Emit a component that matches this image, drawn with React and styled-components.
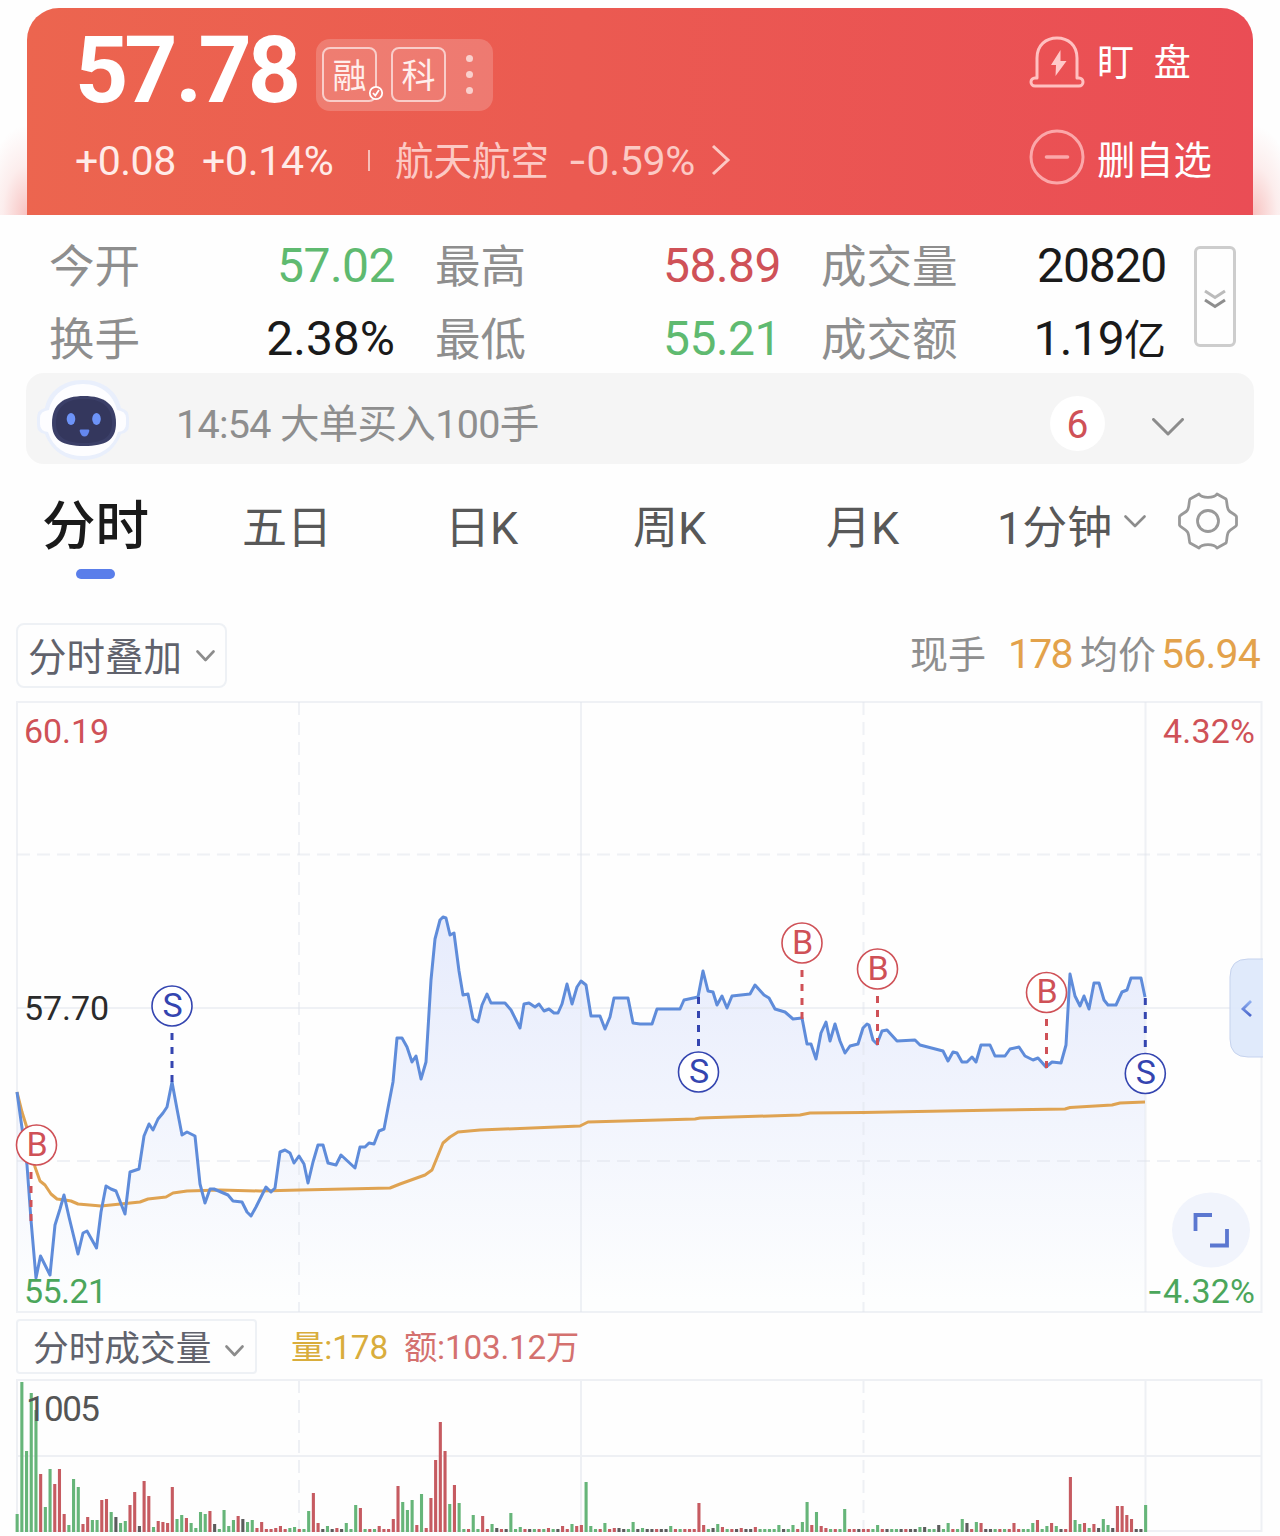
import React from "react";
import styled, { createGlobalStyle, css } from "styled-components";

const RED = "#cf5157";
const GREEN = "#5fba70";
const BLUE = "#3445b0";
const GRID = "#eef0f4";

const GlobalStyle = createGlobalStyle`
  * { box-sizing: border-box; }
  body {
    margin: 0;
    background: #fefefe;
    font-family: Roboto, "Noto Sans CJK SC", sans-serif;
  }
`;

const Page = styled.div`
  width: 1280px;
  height: 1536px;
  overflow: hidden;
  display: flex;
  flex-direction: column;
  background: #fefefe;
`;

const Text = styled.span`
  padding-top: ${(p) => p.$drop || 0}px;
  font-size: ${(p) => p.$size}px;
  line-height: 1.1;
  letter-spacing: ${(p) => p.$track || 0}px;
  font-weight: ${(p) => p.$weight || 400};
  color: ${(p) => p.$color || "inherit"};
  white-space: pre;
`;

const Minus = styled.span`
  font-family: Inter, sans-serif;
`;

/* ---------- price header ---------- */

const Hero = styled.header`
  flex: none;
  height: 215px;
  padding: 8px 27px 0;
  background:
    radial-gradient(ellipse 44px 90px at 27px 100%, rgba(236, 90, 85, 0.36), rgba(236, 90, 85, 0.1) 55%, rgba(236, 90, 85, 0) 100%),
    radial-gradient(ellipse 44px 90px at 1253px 100%, rgba(236, 90, 85, 0.36), rgba(236, 90, 85, 0.1) 55%, rgba(236, 90, 85, 0) 100%),
    #fefefe;
`;

const HeroCard = styled.div`
  height: 207px;
  border-radius: 32px 32px 0 0;
  background: linear-gradient(92deg, #ec654f 0%, #eb5a51 45%, #ea4d55 100%);
  color: #fff;
  display: flex;
  justify-content: space-between;
`;

const Quote = styled.div`
  display: flex;
  flex-direction: column;
  padding: 14px 0 0 48px;
`;

const PriceRow = styled.div`
  height: 98px;
  display: flex;
  align-items: center;
`;

const Price = styled.div`
  width: 241px;
  font-size: 93px;
  font-weight: 700;
  line-height: 98px;
  letter-spacing: -4.2px;
`;

const Point = styled.span`
  margin: 0 0.5px 0 2px;
`;

const TagGroup = styled.div`
  width: 177px;
  height: 72px;
  margin-top: 7px;
  padding: 0 20px 0 6px;
  border-radius: 14px;
  background: rgba(255, 255, 255, 0.19);
  display: flex;
  align-items: center;
  gap: 14px;
`;

const Tag = styled.div`
  position: relative;
  width: 55px;
  height: 55px;
  padding-top: 2px;
  border: 2px solid rgba(255, 255, 255, 0.62);
  border-radius: 8px;
  display: flex;
  align-items: center;
  justify-content: center;
  font-size: 34px;
  line-height: 1;
  color: #ffeeec;
`;

const TagCheck = styled.svg`
  position: absolute;
  right: -9px;
  bottom: -1px;
`;

const Dots = styled.div`
  display: flex;
  flex-direction: column;
  gap: 9px;
  margin-left: 6px;
  i {
    width: 7px;
    height: 7px;
    border-radius: 50%;
    background: rgba(255, 255, 255, 0.65);
  }
`;

const ChangeRow = styled.div`
  display: flex;
  align-items: center;
  height: 80px;
`;

const ChangeItem = styled.div`
  width: ${(p) => p.$w}px;
  display: flex;
  align-items: center;
`;

const Bar = styled.i`
  width: 2px;
  height: 21px;
  background: rgba(255, 255, 255, 0.6);
`;

const Actions = styled.div`
  display: flex;
  flex-direction: column;
  width: 224px;
  padding-top: 5px;
`;

const Action = styled.div`
  height: ${(p) => p.$h}px;
  display: flex;
  align-items: center;
  gap: 12px;
`;

/* ---------- stats ---------- */

const Stats = styled.section`
  flex: none;
  height: 158px;
  padding: 14px 0 0 49px;
  display: flex;
`;

const StatGrid = styled.div`
  display: grid;
  grid-template-columns: 346px 346px 345px;
  grid-auto-rows: 73px;
  column-gap: 40px;
`;

const Stat = styled.div`
  display: flex;
  align-items: center;
  justify-content: space-between;
`;

const ExpandButton = styled.div`
  width: 42px;
  height: 101px;
  padding-top: 4px;
  margin: 17px 0 0 28px;
  border: 3px solid #cdcdcd;
  border-radius: 6px;
  display: flex;
  align-items: center;
  justify-content: center;
`;

/* ---------- notice ---------- */

const Notice = styled.section`
  flex: none;
  height: 91px;
  margin: 0 26px;
  padding-left: 10px;
  border-radius: 18px;
  background: #f5f5f5;
  display: flex;
  align-items: center;
`;

const RobotBox = styled.div`
  display: flex;
  padding-top: 3px;
`;

const NoticeText = styled.div`
  flex: 1;
  padding: 12px 0 0 45px;
  display: flex;
  align-items: center;
`;

const Badge = styled.div`
  width: 55px;
  height: 55px;
  margin-top: 10px;
  border-radius: 50%;
  background: #fff;
  color: ${RED};
  display: flex;
  align-items: center;
  justify-content: center;
`;

const NoticeChevron = styled.div`
  display: flex;
  margin: 16px 70px 0 47px;
`;

/* ---------- tabs ---------- */

const Tabs = styled.nav`
  flex: none;
  height: 159px;
  padding: 20px 0 0 42px;
  display: grid;
  grid-template-columns: 200px 203px 188px 193px 171px 181px 1fr;
  align-items: start;
`;

const Tab = styled.div`
  height: 88px;
  display: flex;
  align-items: center;
  gap: 12px;
  font-size: 45px;
  line-height: 1;
  color: #585858;
  ${(p) =>
    p.$active &&
    css`
      flex-direction: column;
      align-items: flex-start;
      gap: 15px;
      padding-top: 16px;
      height: 98px;
      font-size: 53.5px;
      font-weight: 500;
      color: #1a1a1a;
    `}
`;

const TabCaret = styled.div`
  display: flex;
  padding-bottom: 14px;
`;

const Underline = styled.i`
  flex: none;
  width: 39px;
  height: 10px;
  margin-left: 34px;
  border-radius: 5px;
  background: #5a7eea;
`;

const GearBox = styled.div`
  display: flex;
  padding-top: 8px;
`;

/* ---------- chart toolbars ---------- */

const Toolbar = styled.div`
  flex: none;
  height: ${(p) => p.$h}px;
  padding: 0 19px 0 16px;
  display: flex;
  align-items: flex-start;
`;

const SelectBox = styled.div`
  width: ${(p) => p.$w}px;
  height: ${(p) => p.$h}px;
  padding-left: ${(p) => p.$pad}px;
  border: 2px solid #eef1f5;
  border-radius: ${(p) => p.$r}px;
  color: #60626c;
  display: flex;
  align-items: center;
  gap: 14px;
`;

const BoxCaret = styled.div`
  display: flex;
  padding-top: ${(p) => p.$drop || 0}px;
`;

const Readout = styled.div`
  margin-left: auto;
  height: 61px;
  display: flex;
  align-items: center;
`;

const ReadoutItem = styled.div`
  width: ${(p) => p.$w}px;
  display: flex;
  align-items: center;
`;

const VolumeReadout = styled.div`
  height: 55px;
  margin-left: 34px;
  display: flex;
  align-items: center;
  gap: 16px;
`;

const ChartSvg = styled.svg`
  flex: none;
  display: block;
  text {
    font-family: Roboto, "Noto Sans CJK SC", sans-serif;
  }
`;

const Caret = ({ w = 19, h = 12, color = "#8c8c8c", stroke = 2.6 }) => (
  <svg width={w} height={h} viewBox={`0 0 ${w} ${h}`} fill="none">
    <path d={`M1.5 1.5 L${w / 2} ${h - 2} L${w - 1.5} 1.5`} stroke={color} strokeWidth={stroke} strokeLinecap="round" strokeLinejoin="round" />
  </svg>
);

const AlarmIcon = () => (
  <svg width="56" height="52" viewBox="0 0 56 52" fill="none" stroke="#ffc0c0" strokeWidth="3">
    <path d="M8 42 V22 C8 9 17 2 28 2 C39 2 48 9 48 22 V42 H50 A4 4 0 0 1 50 50 H6 A4 4 0 0 1 6 42 Z" strokeLinejoin="round" />
    <path d="M31.5 14 L22 29 H27 L26.5 40 L37.5 25 H31.5 Z" fill="#ffc9c9" stroke="none" />
  </svg>
);

const RemoveIcon = () => (
  <svg width="56" height="56" viewBox="0 0 56 56" fill="none" stroke="#fba7a9" strokeWidth="3">
    <circle cx="28" cy="28" r="26" />
    <path d="M17.5 28 H38.5" strokeWidth="3.6" strokeLinecap="round" />
  </svg>
);

const Robot = () => (
  <svg width="95" height="82" viewBox="0 0 95 82">
    <path d="M47 1 C69 1 82 14 85 29 Q93 31 93 39 V46 Q93 54 85 55 C79 71 66 81 47 81 C28 81 15 71 9 55 Q1 54 1 46 V39 Q1 31 9 29 C12 14 25 1 47 1 Z" fill="#e9effc" />
    <path d="M47 5 C66 5 78 17 81 31 Q90 32 90 39 V45 Q90 52 82 53 C77 69 64 77 47 77 C30 77 17 69 12 53 Q4 52 4 45 V39 Q4 32 13 31 C16 17 28 5 47 5 Z" fill="#fdfdff" />
    <path d="M48 17 C68 17 80 25 80 44 C80 61 70 67 48 67 C26 67 16 61 16 44 C16 25 28 17 48 17 Z" fill="#3b3f68" />
    <path d="M48 20 C65 20 76 27 76 44 C76 58 67 64 48 64 C29 64 20 58 20 44 C20 27 31 20 48 20 Z" fill="#34375d" />
    <ellipse cx="35" cy="40" rx="4.3" ry="6" fill="#6d93f7" />
    <ellipse cx="60.5" cy="40" rx="4.3" ry="6" fill="#6d93f7" />
    <path d="M44.5 50.5 H52.5 Q53.5 50.5 53.3 52 Q52 57.5 48.5 57.5 Q45 57.5 43.7 52 Q43.5 50.5 44.5 50.5 Z" fill="#6487ee" />
  </svg>
);

const GearIcon = () => (
  <svg width="60" height="58" viewBox="0 0 60 58" fill="none" stroke="#999" strokeWidth="2.8" strokeLinejoin="round">
    <path d="M21 2 C24 6.5 36 6.5 39 2 L48 7 C49 8 48.5 15 50.5 18 C52 21 58.5 22.5 58.5 25 V33 C58.5 35 52 37 50.5 40 C48.5 43 49 50 48 51 L39 56 C36 51.5 24 51.5 21 56 L12 51 C11 50 11.5 43 9.5 40 C8 37 1.5 35 1.5 33 V25 C1.5 22.5 8 21 9.5 18 C11.5 15 11 8 12 7 Z" />
    <circle cx="30" cy="29" r="10.5" />
  </svg>
);

/* ---------- data ---------- */

const PRICE_LINE =
  "17,1092 22,1128 27,1165 31,1220 36,1278 40.5,1256 45,1265 50,1275 55,1225 60,1209 64,1195 69,1217 78,1254 83,1233 87,1231 96.5,1248 101,1212 106,1186 111,1189 116,1191 125,1214 130,1172 139,1169 144,1136 149,1124 153,1130 158,1119 163,1113 167,1107 172,1082 177,1109 182,1135 187,1132 195,1136 200,1184 205,1203 210,1189 214,1189 228,1195 233,1201 242,1202 247,1212 251,1216 256,1207 266,1187 271,1192 275,1188 280,1152 285,1150 290,1153 294,1163 299,1156 304,1164 308,1183 313,1162 318,1145 323,1145 328,1163 336,1165 341,1155 355,1168 360,1147 365,1147 369,1143 374,1144 379,1131 384,1129 388,1108 393,1082 397,1038 402,1038 407,1047 412,1062 416,1056 421,1079 426,1062 431,980 435,939 440,920 443,917 446,918 450,935 454,933 459,971 463,995 468,994 473,1019 478,1022 482,1005 487,994 491,1003 505,1003 511,1010 520,1028 524,1004 529,1003 535,1007 539,1004 544,1011 549,1009 554,1013 558,1013 562,1004 567,984 572,1004 577,987 581,981 586,985 591,1016 600,1016 605,1029 610,1017 614,998 628,998 633,1023 640,1024 652,1024 657,1009 680,1009 684,1000 698,997 703,971 708,991 713,992 717,1005 722,996 727,1008 732,996 750,994 755,985 764,995 769,998 775,1009 785,1012 793,1019 802,1018 807,1044 811,1044 816,1059 821,1033 826,1022 830,1041 835,1024 840,1041 845,1053 850,1046 858,1044 863,1028 867,1024 869,1025 873,1040 877,1044 882,1031 887,1030 897,1041 915,1040 920,1045 943,1051 948,1061 953,1052 957,1053 962,1062 967,1062 972,1057 976,1062 981,1045 990,1045 995,1056 1005,1056 1010,1049 1019,1047 1025,1056 1033,1060 1038,1058 1046,1067 1052,1062 1061,1063 1066,1045 1070,974 1075,996 1080,1006 1084,996 1089,1009 1094,983 1099,983 1104,1000 1108,1005 1116,1005 1122,992 1127,990 1131,978 1141,978 1145,997";

const AVERAGE_LINE =
  "17,1092 22,1112 27,1128 35,1167 40,1181 45,1185 51,1194 57,1199 65,1200 71,1201 78,1204 101,1206 140,1202 148,1199 166,1197 173,1193 187,1191 220,1190 260,1191 300,1190 390,1188 400,1184 425,1175 432,1170 443,1143 450,1137 458,1132 480,1130 580,1126 588,1122 695,1119 700,1118 800,1115 810,1113 863,1112.5 1000,1110 1065,1109 1070,1107.5 1112,1105 1120,1103 1145,1102";

const MARKERS = [
  { side: "B", x: 36.5, y: 1145, stem: 31, from: 1172, to: 1222 },
  { side: "S", x: 172, y: 1006, stem: 172, from: 1082, to: 1033 },
  { side: "S", x: 698.5, y: 1072, stem: 698.5, from: 997, to: 1046 },
  { side: "B", x: 802, y: 943, stem: 802, from: 970, to: 1019 },
  { side: "B", x: 877.5, y: 969, stem: 877.5, from: 996, to: 1045 },
  { side: "B", x: 1046.5, y: 992.5, stem: 1046.5, from: 1019, to: 1068 },
  { side: "S", x: 1145.3, y: 1073.5, stem: 1145.3, from: 998, to: 1047 },
];

const VOLUMES =
  "18g 150g 81g 139g 122g 58r 25g 63g 48r 63r 18r 7g 53g 45g 8r 15r 12g 12g 32r 33r 20g 15k 9g 11g 27r 40r 6k 51r 36r 5g 11r 10r 9r 45r 13g 17g 14r 9g 4g 20g 18g 21r 8k 3g 22g 6g 12g 16r 13k 10g 12g 4r 10r 3r 3r 4r 6r 3r 4g 5g 3r 3g 21g 39r 9r 3k 6g 3k 4r 3k 9g 3g 27g 24r 3g 3r 3g 6r 3r 3r 13r 46r 30g 22g 32g 7r 38g 4r 34r 72r 110r 81r 28g 47r 29g 3g 3r 17g 3g 16r 3r 8g 4k 3r 3k 19g 3g 5g 3r 3k 3g 3r 3g 4r 3g 3k 6r 3r 8g 6r 7r 50g 6g 3g 3r 9g 3r 4r 4k 3k 3g 10g 3k 4g 3k 3k 3r 3k 3k 6g 3r 3g 3r 3r 3r 29r 7r 3g 4k 8g 5r 3g 3r 3k 4r 3k 3k 5r 3g 3g 3g 3g 7g 3k 3g 7g 3r 10g 30g 7r 20g 6r 4r 3g 3r 3g 23g 3r 3r 3k 3r 3r 3g 7g 3r 3k 3g 3g 3k 3r 3k 3k 5g 5k 3g 3g 7k 3g 9g 3r 3g 13g 9k 3r 10g 9r 3k 3k 3g 3r 3g 3r 9r 3r 3g 3g 9g 12r 3g 6g 9r 6g 3k 3r 55r 12g 8g 9r 4g 8r 4k 13g 7g 4k 26r 26r 17r 13r 3k 3k 27g"
    .split(" ")
    .map((s) => ({ h: parseInt(s, 10), tone: s.slice(-1) }));

const TONES = { g: "#66b579", r: "#c65b61", k: "#5c5c5c" };

const STATS = [
  { label: "今开", value: "57.02", color: GREEN },
  { label: "最高", value: "58.89", color: RED },
  { label: "成交量", value: "20820", color: "#1a1a1a", track: -1.2 },
  { label: "换手", value: "2.38%", color: "#1a1a1a", track: 0 },
  { label: "最低", value: "55.21", color: GREEN },
  { label: "成交额", value: "1.19", unit: "亿", color: "#1a1a1a", track: -0.8 },
];

const Marker = ({ side, x, y, stem, from, to }) => {
  const color = side === "B" ? RED : BLUE;
  return (
    <g>
      <line x1={stem} x2={stem} y1={from} y2={to} stroke={color} strokeWidth="3" strokeDasharray="7 7" />
      <circle cx={x} cy={y} r="20" fill="#fff" stroke={color} strokeWidth="1.6" />
      <text x={x + 0.5} y={y + 10.5} textAnchor="middle" fontSize="34" fill={color}>{side}</text>
    </g>
  );
};

const PriceChart = () => (
  <ChartSvg width="1280" height="623" viewBox="0 696 1280 623">
    <defs>
      <linearGradient id="area" gradientUnits="userSpaceOnUse" x1="0" y1="910" x2="0" y2="1300">
        <stop offset="0" stopColor="#e6ebfc" />
        <stop offset="0.5" stopColor="#f1f4fd" />
        <stop offset="1" stopColor="#fdfefe" />
      </linearGradient>
      <linearGradient id="handle" x1="0" y1="0" x2="0" y2="1">
        <stop offset="0" stopColor="#8fb0f0" />
        <stop offset="1" stopColor="#4a66cc" />
      </linearGradient>
    </defs>
    <polygon points={`${PRICE_LINE} 1145,1312 17,1312`} fill="url(#area)" />
    <g stroke="#dfe3ec" strokeOpacity="0.5" strokeWidth="2" fill="none">
      <rect x="17" y="702" width="1244.5" height="610" />
      <path d="M581 702 V1312 M1145.5 702 V1312 M17 1008 H1261" />
      <path d="M299 702 V1312 M863.5 702 V1312" strokeDasharray="13 7" />
      <path d="M17 854.5 H1261 M17 1161 H1261" strokeDasharray="13 7" />
    </g>
    <polyline points={AVERAGE_LINE} fill="none" stroke="#dfa352" strokeWidth="3" strokeLinejoin="round" />
    <polyline points={PRICE_LINE} fill="none" stroke="#5f8cda" strokeWidth="3" strokeLinejoin="round" />
    {MARKERS.map((m) => (
      <Marker key={`${m.x}`} {...m} />
    ))}
    <g fontSize="34">
      <text x="24" y="743" fill={RED} textLength="85">60.19</text>
      <text x="1255" y="743" fill={RED} textAnchor="end" textLength="92">4.32%</text>
      <text x="24" y="1020" fill="#2b2b2b" textLength="85">57.70</text>
      <text x="24" y="1303" fill="#4ba65b" textLength="83">55.21</text>
      <text x="1147" y="1303" fill="#4ba65b" fontFamily="Inter">
        <tspan style={{ fontFamily: "Inter" }}>-</tspan>
        <tspan x="1163" textLength="92">4.32%</tspan>
      </text>
    </g>
    <path d="M1263 959 H1248 Q1230 959 1230 977 V1039 Q1230 1057 1248 1057 H1263 Z" fill="#dde8fb" fillOpacity="0.92" />
    <path d="M1263 959 H1248 Q1230 959 1230 977 V1039 Q1230 1057 1248 1057 H1263" fill="none" stroke="#c6d3ee" strokeWidth="1" />
    <path d="M1251 1001 L1243 1009 L1251 1016" fill="none" stroke="url(#handle)" strokeWidth="2.8" />
    <ellipse cx="1211" cy="1230" rx="39" ry="37.5" fill="#f1f4fc" />
    <path d="M1195.5 1231 V1215 H1212 M1210 1245.5 H1227 V1229" fill="none" stroke="#5b77d0" strokeWidth="3.8" />
  </ChartSvg>
);

const VolumeChart = () => (
  <ChartSvg width="1280" height="162" viewBox="0 1374 1280 162">
    <g stroke={GRID} strokeWidth="2" fill="none">
      <rect x="17" y="1380" width="1244.5" height="151" />
      <path d="M581 1380 V1531 M1145.5 1380 V1531 M17 1456 H1261" />
      <path d="M299 1380 V1531 M863.5 1380 V1531" strokeDasharray="13 7" />
    </g>
    {VOLUMES.map((v, i) => (
      <rect key={i} x={15.6 + i * 4.702} y={1532 - v.h} width="3.1" height={v.h} fill={TONES[v.tone]} />
    ))}
    <text x="26" y="1421" fontSize="35" fill="#555" textLength="74">1005</text>
  </ChartSvg>
);

export default function App() {
  return (
    <Page>
      <GlobalStyle />
      <Hero>
        <HeroCard>
          <Quote>
            <PriceRow>
              <Price>57<Point>.</Point>78</Price>
              <TagGroup>
                <Tag>
                  融
                  <TagCheck width="16" height="16" viewBox="0 0 16 16" fill="none" stroke="#fff" strokeWidth="1.8">
                    <circle cx="8" cy="8" r="6.2" fill="#ed7b70" />
                    <path d="M5 8 L7.3 10.5 L11 5" />
                  </TagCheck>
                </Tag>
                <Tag>科</Tag>
                <Dots><i /><i /><i /></Dots>
              </TagGroup>
            </PriceRow>
            <ChangeRow>
              <ChangeItem $w={127}><Text $drop={3} $size={41} $track={-0.5} $color="#ffebe8">+0.08</Text></ChangeItem>
              <ChangeItem $w={166}><Text $drop={3} $size={41} $track={-0.3} $color="#ffebe8">+0.14%</Text></ChangeItem>
              <ChangeItem $w={27}><Bar /></ChangeItem>
              <ChangeItem $w={173}><Text $drop={5} $size={38.5} $color="#fcc9c4">航天航空</Text></ChangeItem>
              <ChangeItem $w={143}><Text $drop={3} $size={41} $track={-0.3} $color="#fcc9c4"><Minus>-</Minus>0.59%</Text></ChangeItem>
              <svg width="20" height="32" viewBox="0 0 20 32" fill="none">
                <path d="M2 2 L17 16 L2 30" stroke="#fcc9c4" strokeWidth="3" />
              </svg>
            </ChangeRow>
          </Quote>
          <Actions>
            <Action $h={97}><AlarmIcon /><Text $drop={3} $size={37}>盯<Text $size={40}>  </Text>盘</Text></Action>
            <Action $h={94}><RemoveIcon /><Text $drop={9} $size={38.3}>删自选</Text></Action>
          </Actions>
        </HeroCard>
      </Hero>

      <Stats>
        <StatGrid>
          {STATS.map((s) => (
            <Stat key={s.label}>
              <Text $drop={5} $size={45.5} $color="#8e8e8e">{s.label}</Text>
              <Text $drop={2} $size={48} $track={s.track ?? -0.5} $color={s.color}>
                {s.value}
                {s.unit && <Text $size={42}>{s.unit}</Text>}
              </Text>
            </Stat>
          ))}
        </StatGrid>
        <ExpandButton>
          <svg width="24" height="22" viewBox="0 0 24 22" fill="none" strokeWidth="3">
            <path d="M2 3 L12 9.5 L22 3" stroke="#bbb" />
            <path d="M2 12 L12 18.5 L22 12" stroke="#8e8e8e" />
          </svg>
        </ExpandButton>
      </Stats>

      <Notice>
        <RobotBox><Robot /></RobotBox>
        <NoticeText>
          <Text $size={39.5} $track={-0.7} $color="#8e8e8e">14:54 大单买入100手</Text>
        </NoticeText>
        <Badge><Text $drop={4} $size={39}>6</Text></Badge>
        <NoticeChevron><Caret w={32} h={18} stroke={3} /></NoticeChevron>
      </Notice>

      <Tabs>
        <Tab $active>分时<Underline /></Tab>
        <Tab>五日</Tab>
        <Tab>日K</Tab>
        <Tab>周K</Tab>
        <Tab>月K</Tab>
        <Tab>1分钟<TabCaret><Caret w={22} h={13} /></TabCaret></Tab>
        <GearBox><GearIcon /></GearBox>
      </Tabs>

      <Toolbar $h={73}>
        <SelectBox $w={211} $h={65} $pad={10} $r={8}>
          <Text $drop={5} $size={38.5}>分时叠加</Text><BoxCaret><Caret /></BoxCaret>
        </SelectBox>
        <Readout>
          <ReadoutItem $w={98}><Text $drop={4} $size={38} $color="#8e8e8e">现手</Text></ReadoutItem>
          <ReadoutItem $w={72}><Text $drop={2} $size={41} $track={-1.8} $color="#e3a24b">178</Text></ReadoutItem>
          <ReadoutItem $w={81}><Text $drop={4} $size={38} $color="#8e8e8e">均价</Text></ReadoutItem>
          <ReadoutItem $w={100}><Text $drop={2} $size={41} $track={-0.8} $color="#e3a24b">56.94</Text></ReadoutItem>
        </Readout>
      </Toolbar>
      <PriceChart />
      <Toolbar $h={55}>
        <SelectBox $w={241} $h={55} $pad={15} $r={4}>
          <Text $drop={7} $size={35.7}>分时成交量</Text><BoxCaret $drop={8}><Caret /></BoxCaret>
        </SelectBox>
        <VolumeReadout>
          <Text $drop={4} $size={33.3} $track={-0.1} $color="#d9ad3c">量:178</Text>
          <Text $drop={4} $size={33.3} $track={-0.2} $color="#d4716f">额:103.12万</Text>
        </VolumeReadout>
      </Toolbar>
      <VolumeChart />
    </Page>
  );
}
